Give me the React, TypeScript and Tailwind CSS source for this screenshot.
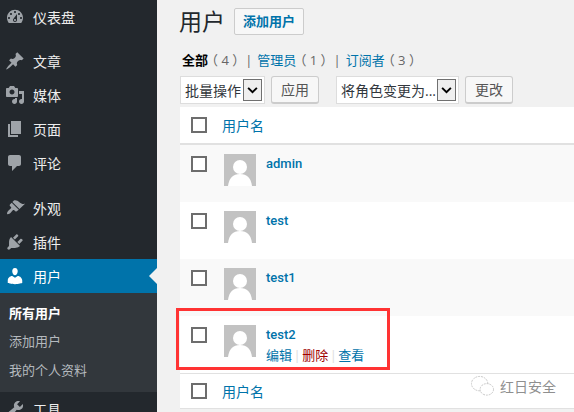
import { ReactNode } from "react";

const icons: Record<string, string> = {
  dashboard:
    "M3.76 16h12.48c1.1-1.43 1.76-3.21 1.76-5.14 0-4.66-3.8-8-8-8S2 6.2 2 10.86c0 1.93.66 3.71 1.76 5.14zM10 4c.55 0 1 .45 1 1s-.45 1-1 1-1-.45-1-1 .45-1 1-1zM6 6c.55 0 1 .45 1 1s-.45 1-1 1-1-.45-1-1 .45-1 1-1zm8 0c.55 0 1 .45 1 1s-.45 1-1 1-1-.45-1-1 .45-1 1-1zm-5.37 5.55L12 7v6c0 1.1-.9 2-2 2s-2-.9-2-2c0-.57.24-1.08.63-1.45zM4 10c.55 0 1 .45 1 1s-.45 1-1 1-1-.45-1-1 .45-1 1-1zm12 0c.55 0 1 .45 1 1s-.45 1-1 1-1-.45-1-1 .45-1 1-1zm-5 3c0-.55-.45-1-1-1s-1 .45-1 1 .45 1 1 1 1-.45 1-1z",
  post: "M10.44 3.02l1.82-1.82 6.36 6.35-1.83 1.82c-1.05-.68-2.48-.57-3.41.36l-.75.75c-.92.93-1.04 2.35-.35 3.41l-1.83 1.82-2.41-2.41-2.8 2.79c-.42.42-3.38 2.71-3.8 2.29s1.86-3.39 2.28-3.81l2.79-2.79L4.1 9.36l1.83-1.82c1.05.69 2.48.57 3.4-.36l.75-.75c.93-.92 1.05-2.35.36-3.41z",
  media:
    "M13 11V4c0-.55-.45-1-1-1h-1.67L9 1H5L3.67 3H2c-.55 0-1 .45-1 1v7c0 .55.45 1 1 1h10c.55 0 1-.45 1-1zM7 4.5c1.38 0 2.5 1.12 2.5 2.5S8.38 9.5 7 9.5 4.5 8.38 4.5 7 5.62 4.5 7 4.5zM14 6h5v10.5c0 1.38-1.12 2.5-2.5 2.5S14 17.88 14 16.5s1.12-2.5 2.5-2.5c.17 0 .34.02.5.05V9h-3V6zm-4 8.05V13h2v3.5c0 1.38-1.12 2.5-2.5 2.5S7 17.88 7 16.5 8.12 14 9.5 14c.17 0 .34.02.5.05z",
  page: "M6 15V2h10v13H6zm-1 1h8v2H3V5h2v11z",
  comment: "M5 2h9c1.1 0 2 .9 2 2v7c0 1.1-.9 2-2 2h-2l-5 5v-5H5c-1.1 0-2-.9-2-2V4c0-1.1.9-2 2-2z",
  appearance:
    "M14.48 11.06L7.41 3.99l1.5-1.5c.5-.56 2.3-.47 3.51.32 1.21.8 1.43 1.28 2.91 2.1 1.18.64 2.45 1.26 4.67.85zm-.71.71L6.7 4.7 4.93 6.47c-.39.39-.39 1.02 0 1.41l1.06 1.06c.39.39.39 1.03 0 1.42-.6.6-1.43 1.15-2.21 1.93-1.23 1.23-2.21 2.99-1.54 3.66s2.43-.31 3.66-1.54c.78-.78 1.33-1.61 1.93-2.21.39-.39 1.03-.39 1.42 0l1.06 1.06c.39.39 1.02.39 1.41 0z",
  plugin:
    "M13.11 4.36L9.87 7.6 8 5.73l3.24-3.24c.35-.34 1.05-.2 1.56.32.52.51.66 1.21.31 1.55zm-8 1.77l.91-1.12 9.01 9.01-1.19.84c-.71.71-2.63 1.16-3.82 1.16H6.14L4.9 17.26c-.59.59-1.54.59-2.12 0-.59-.58-.59-1.53 0-2.12l1.24-1.24v-3.88c0-1.13.4-3.18 1.09-3.89zm7.26 3.97l3.24-3.24c.34-.35 1.04-.21 1.55.31.52.51.66 1.21.31 1.55l-3.24 3.25z",
  users:
    "M10 9.25c-2.27 0-2.73-3.44-2.73-3.44C7 4.02 7.82 2 9.97 2c2.16 0 2.98 2.02 2.71 3.81 0 0-.41 3.44-2.68 3.44zm0 2.57L12.72 10c2.39 0 4.52 2.33 4.52 4.53v2.49s-3.65 1.13-7.24 1.13c-3.65 0-7.24-1.13-7.24-1.13v-2.49c0-2.25 1.94-4.48 4.47-4.48z",
  tools:
    "M16.68 9.77c-1.34 1.34-3.3 1.67-4.95.99l-5.41 6.52c-.99.99-2.59.99-3.58 0s-.99-2.59 0-3.57l6.52-5.42c-.68-1.65-.35-3.61.99-4.95 1.28-1.28 3.12-1.62 4.72-1.06l-2.89 2.89 2.82 2.82 2.89-2.89c.56 1.6.22 3.44-1.06 4.72zM3.81 16.21c.4.39 1.03.39 1.42 0 .4-.4.4-1.03 0-1.42-.39-.4-1.02-.4-1.42 0-.39.39-.39 1.02 0 1.42z",
};

function Icon({ name }: { name: string }): ReactNode {
  return (
    <svg viewBox="0 0 20 20" className="w-[20px] h-[20px]" fill="currentColor" fillRule="evenodd">
      <path d={icons[name]} />
    </svg>
  );
}

function MenuItem({ icon, label, active, className = "" }: { icon: string; label: string; active?: boolean; className?: string }) {
  return (
    <div
      className={`relative h-[34px] flex items-center text-[14px] ${active ? "bg-[#0073aa] text-white" : "text-[#eeeeee]"} ${className}`}
    >
      <div className={`w-[33px] pl-[5px] ${active ? "text-white" : "text-[#9ea3a8]"}`}>
        <Icon name={icon} />
      </div>
      <span>{label}</span>
      {active && (
        <div className="absolute right-0 top-[9px] border-y-[8px] border-r-[8px] border-y-transparent border-r-[#f1f1f1]" />
      )}
    </div>
  );
}

function Sidebar() {
  return (
    <aside className="w-[157px] shrink-0 h-[412px] overflow-hidden bg-[#23282d]">
      <MenuItem icon="dashboard" label="仪表盘" className="mb-[10px]" />
      <MenuItem icon="post" label="文章" />
      <MenuItem icon="media" label="媒体" />
      <MenuItem icon="page" label="页面" />
      <MenuItem icon="comment" label="评论" className="mb-[11px]" />
      <MenuItem icon="appearance" label="外观" />
      <MenuItem icon="plugin" label="插件" />
      <MenuItem icon="users" label="用户" active />
      <div className="bg-[#32373c] h-[99px] pt-[6px] text-[13px] text-[#b4b9be]">
        <div className="h-[28px] leading-[28px] pl-[9px] font-bold text-white">所有用户</div>
        <div className="h-[29px] leading-[29px] pl-[9px]">添加用户</div>
        <div className="h-[28px] leading-[28px] pl-[9px]">我的个人资料</div>
      </div>
      <MenuItem icon="tools" label="工具" />
    </aside>
  );
}

function Check() {
  return <div className="w-[16px] h-[16px] shrink-0 border-2 border-[#6d6d6d] bg-white" />;
}

function Avatar() {
  return (
    <div className="w-[32px] h-[32px] bg-[#c2c2c2] overflow-hidden shrink-0">
      <svg viewBox="0 0 32 32" className="w-[32px] h-[32px]" fill="#ffffff">
        <circle cx="16" cy="13" r="7" />
        <path d="M4 32c1-8 5-12 12-12s11 4 12 12z" />
      </svg>
    </div>
  );
}

function Sep() {
  return <span className="text-[#dddddd] mx-[1.5px]">|</span>;
}

function UserRow({ name, alt, actions }: { name: string; alt?: boolean; actions?: boolean }) {
  return (
    <div className={`h-[57px] flex pl-[11px] pt-[9px] ${alt ? "bg-[#f9f9f9]" : "bg-white"}`}>
      <div className="pt-[2px] mr-[17px]">
        <Check />
      </div>
      <Avatar />
      <div className="ml-[10px] text-[13px] text-[#0073aa]">
        <div className="h-[20px] leading-[20px] font-medium font-['Roboto','Noto_Sans_CJK_SC',sans-serif]">{name}</div>
        {actions && (
          <div className="h-[20px] leading-[20px] flex items-center">
            <span>编辑</span>
            <Sep />
            <span className="text-[#a00000]">删除</span>
            <Sep />
            <span>查看</span>
          </div>
        )}
      </div>
    </div>
  );
}

function HeadRow({ className }: { className: string }) {
  return (
    <div className={`flex items-center pl-[11px] bg-white border-[#e1e1e1] ${className}`}>
      <div className="mr-[15px]">
        <Check />
      </div>
      <span className="text-[14px] text-[#0073aa]">用户名</span>
    </div>
  );
}

function FakeSelect({ label, width }: { label: string; width: string }) {
  return (
    <div className={`h-[28px] ${width} bg-white border border-[#dddddd] flex items-center pl-[4px] pr-[2px] text-[14px] text-[#32373c]`}>
      <span className="flex-1 pt-[1px] whitespace-nowrap overflow-hidden">{label}</span>
      <div className="w-[19px] h-[22px] shrink-0 border border-[#707070] bg-[#efefef] flex items-center justify-center">
        <svg viewBox="0 0 12 8" className="w-[11px] h-[7px]" fill="none" stroke="#000000" strokeWidth="2.2">
          <path d="M1 1l5 5 5-5" />
        </svg>
      </div>
    </div>
  );
}

function Button({ label }: { label: string }) {
  return (
    <div className="h-[28px] w-[48px] flex items-center justify-center rounded-[3px] border border-[#cccccc] border-b-[2px] bg-[#f7f7f7] text-[14px] text-[#555555]">
      {label}
    </div>
  );
}

function Count({ label, n, first }: { label: string; n: number; first?: boolean }) {
  return (
    <>
      <span className={first ? "font-semibold text-black" : "text-[#0073aa] ml-[5px]"}>{label}</span>
      {/* halt trims the full-width brackets so they sit tight like the original font */}
      <span className="ml-[3.5px] mr-[6.5px] whitespace-pre [font-feature-settings:'halt']">{`（ ${n} ）`}</span>
    </>
  );
}

export default function App() {
  return (
    <div className="relative w-[574px] h-[412px] overflow-hidden flex bg-[#f1f1f1] font-['Open_Sans','Noto_Sans_CJK_SC',sans-serif]">
      <Sidebar />
      <main className="flex-1 min-w-0 pl-[23px] pt-[8px]">
        <div className="flex items-center h-[27px]">
          <h1 className="text-[23px] text-[#23282d] w-[54px] ml-[-1px] mr-[1px]">用户</h1>
          <div className="h-[27px] w-[70px] flex items-center justify-center rounded-[2px] border border-[#cccccc] bg-[#f7f7f7] text-[13px] font-semibold text-[#0073aa]">
            添加用户
          </div>
        </div>
        <div className="h-[20px] mt-[16px] mb-[5px] ml-[2px] flex items-center text-[13px] text-[#666666] whitespace-nowrap">
          <Count label="全部" n={4} first />
          <span>|</span>
          <Count label="管理员" n={1} />
          <span>|</span>
          <Count label="订阅者" n={3} />
        </div>
        <div className="flex items-center h-[28px] gap-[6px]">
          <FakeSelect label="批量操作" width="w-[85px]" />
          <Button label="应用" />
          <div className="w-[5px]" />
          <FakeSelect label="将角色变更为..." width="w-[123px]" />
          <Button label="更改" />
        </div>
        <div className="mt-[3px] border-l border-[#e5e5e5] [&>div]:ml-[-1px]">
          <HeadRow className="h-[38px] border-b-2" />
          <UserRow name="admin" alt />
          <UserRow name="test" />
          <UserRow name="test1" alt />
          <UserRow name="test2" actions />
          <HeadRow className="h-[36px] border-y" />
        </div>
      </main>
      {/* red annotation box */}
      <div className="absolute left-[176px] top-[308px] w-[214px] h-[62px] border-[3px] border-[#ff3333]" />
      {/* watermark */}
      <div className="absolute left-[470px] top-[375px] flex items-center gap-[5px] text-[14px] text-[#8f8f8f]">
        <svg viewBox="0 0 26 24" className="w-[25px] h-[23px]" fill="none" stroke="#c4c4c4" strokeWidth="1" strokeDasharray="2 1">
          <ellipse cx="10" cy="9" rx="8.5" ry="7.5" />
          <ellipse cx="17.5" cy="15" rx="7" ry="6" fill="#ffffff" />
        </svg>
        <span>红日安全</span>
      </div>
    </div>
  );
}
